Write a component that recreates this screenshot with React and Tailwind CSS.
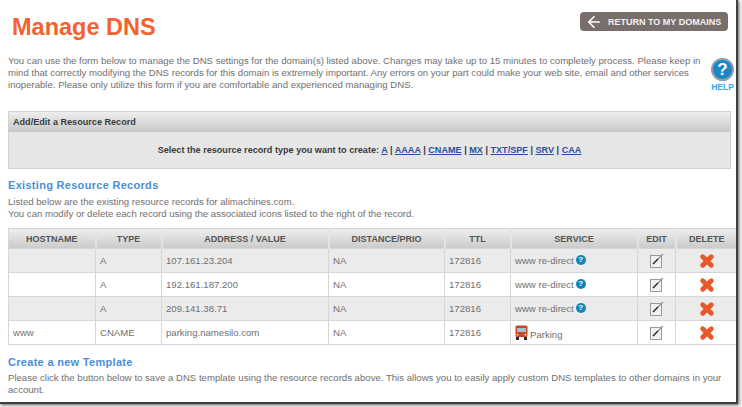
import React from 'react';
import { ArrowLeft } from 'lucide-react';

const rows = [
    { host: '', type: 'A', value: '107.161.23.204', shaded: true },
    { host: '', type: 'A', value: '192.161.187.200', shaded: false },
    { host: '', type: 'A', value: '209.141.38.71', shaded: true },
    { host: 'www', type: 'CNAME', value: 'parking.namesilo.com', shaded: false, parking: true },
];

const recordTypes = ['A', 'AAAA', 'CNAME', 'MX', 'TXT/SPF', 'SRV', 'CAA'];

const HelpDot = () => (
    <span className="inline-flex w-[10px] h-[10px] rounded-full bg-[#0f86b5] text-white text-[8px] leading-none font-bold items-center justify-center ml-[2px] relative -top-[2px]">?</span>
);

const EditIcon = () => (
    <svg width="16" height="17" viewBox="0 0 16 17" className="block mx-auto">
        <rect x="1.5" y="3.5" width="11" height="12" fill="#f1f1f1" stroke="#9a9a9a" />
        <path d="M4 12 L9 7" stroke="#222" strokeWidth="1.5" />
        <path d="M9 7 L14 2" stroke="#8f8f8f" strokeWidth="1.3" />
    </svg>
);

const DeleteIcon = () => (
    <svg width="18" height="18" viewBox="0 0 18 18" className="block mx-auto">
        <path d="M4.7 4.7 L13.3 13.3 M13.3 4.7 L4.7 13.3" stroke="#e9572b" strokeWidth="4.8" strokeLinecap="round" />
    </svg>
);

const BusIcon = () => (
    <svg width="13" height="15" viewBox="0 0 13 15" className="shrink-0">
        <rect x="0.5" y="0.5" width="12" height="11.5" rx="1.5" fill="#c8452c" />
        <rect x="2" y="3" width="9" height="4" fill="#9cc4d4" />
        <rect x="1" y="12" width="3" height="3" fill="#2a2a2a" />
        <rect x="9" y="12" width="3" height="3" fill="#2a2a2a" />
        <rect x="1.5" y="9" width="2" height="1.5" fill="#f3d27a" />
        <rect x="9.5" y="9" width="2" height="1.5" fill="#f3d27a" />
    </svg>
);

const HeadCell = ({ children }) => (
    <th className="border-r-2 border-[#e4e4e4] last:border-r-0 p-0 text-center text-[9px] font-bold text-[#555]">{children}</th>
);

const Cell = ({ children }) => (
    <td className="border border-[#d6d6d6] px-[4px] p-0 align-middle">{children}</td>
);

const App = () => {
    return (
        <div className="w-[742px] h-[407px] bg-[#f4f4f4] overflow-hidden text-[9.6px] leading-[12px] text-[#707070] font-['Liberation_Sans',Arial,sans-serif]">
            <div className="w-[738px] h-[404px] bg-white border-r-2 border-b-2 border-[#3f3f3f] shadow-[1px_1px_3px_rgba(0,0,0,0.6)] px-[8px] overflow-hidden">
                <div className="flex justify-between items-start pt-[12px] h-[52px]">
                    <h1 className="ml-[4px] mt-[1px] text-[23.5px] leading-[28px] font-bold text-[#f4622f]">Manage DNS</h1>
                    <a className="flex items-center gap-[5px] h-[19px] w-[148px] pl-[5px] rounded-[4px] bg-[#786f6c] text-[#f2f2f2] text-[9px] font-bold whitespace-nowrap">
                        <ArrowLeft size={18} strokeWidth={2.2} className="text-white" />
                        RETURN TO MY DOMAINS
                    </a>
                </div>

                <div className="flex h-[59px]">
                    <p className="w-[700px] shrink-0 pt-[3px]">
                        You can use the form below to manage the DNS settings for the domain(s) listed above. Changes may take up to 15 minutes to completely process. Please keep in
                        mind that correctly modifying the DNS records for this domain is extremely important. Any errors on your part could make your web site, email and other services
                        inoperable. Please only utilize this form if you are comfortable and experienced managing DNS.
                    </p>
                    <div className="ml-[3px] flex flex-col items-center w-[24px]">
                        <span className="mt-[6px] flex w-[23px] h-[23px] rounded-full bg-[#1b86c4] border-2 border-[#8f9ea8] text-white font-bold text-[17px] leading-none items-center justify-center">?</span>
                        <span className="mt-[2px] text-[8.5px] leading-[9px] font-bold text-[#3fa5de]">HELP</span>
                    </div>
                </div>

                <section className="w-[723px] h-[58px] border border-[#d2d2d2] bg-[#e6e6e6] text-[9.1px]">
                    <div className="h-[20px] pl-[4px] bg-gradient-to-b from-[#eeeeee] to-[#c8c8c8] font-bold text-[#3a3a3a] leading-[20px]">Add/Edit a Resource Record</div>
                    <p className="pt-[12px] text-center font-bold text-[#3a3a3a]">
                        Select the resource record type you want to create:{' '}
                        {recordTypes.map((t, i) => (
                            <span key={t}>
                                {i > 0 && ' | '}
                                <a className="underline text-[#2c4f9e]">{t}</a>
                            </span>
                        ))}
                    </p>
                </section>

                <h2 className="mt-[10px] text-[11px] leading-[13px] font-bold tracking-[0.3px] text-[#4a8fd6]">Existing Resource Records</h2>
                <p className="mt-[4px]">
                    Listed below are the existing resource records for alimachines.com.<br />
                    You can modify or delete each record using the associated icons listed to the right of the record.
                </p>

                <table className="mt-[8px] w-[729px] table-fixed border-collapse border border-[#d6d6d6]">
                    <colgroup>
                        <col className="w-[87px]" />
                        <col className="w-[66px]" />
                        <col className="w-[167px]" />
                        <col className="w-[116px]" />
                        <col className="w-[66px]" />
                        <col className="w-[127px]" />
                        <col className="w-[38px]" />
                        <col className="w-[62px]" />
                    </colgroup>
                    <thead>
                        <tr className="h-[20px] bg-gradient-to-b from-[#eeeeee] to-[#c9c9c9]">
                            {['HOSTNAME', 'TYPE', 'ADDRESS / VALUE', 'DISTANCE/PRIO', 'TTL', 'SERVICE', 'EDIT', 'DELETE'].map((h) => (
                                <HeadCell key={h}>{h}</HeadCell>
                            ))}
                        </tr>
                    </thead>
                    <tbody>
                        {rows.map((r) => (
                            <tr key={r.value} className={`h-[24px] ${r.shaded ? 'bg-[#ebebeb]' : 'bg-white'}`}>
                                <Cell>{r.host}</Cell>
                                <Cell>{r.type}</Cell>
                                <Cell>{r.value}</Cell>
                                <Cell>NA</Cell>
                                <Cell>172816</Cell>
                                <Cell>
                                    {r.parking ? (
                                        <span className="flex items-end gap-[2px]"><BusIcon /><span className="leading-[11px]">Parking</span></span>
                                    ) : (
                                        <span>www re-direct<HelpDot /></span>
                                    )}
                                </Cell>
                                <Cell><EditIcon /></Cell>
                                <Cell><DeleteIcon /></Cell>
                            </tr>
                        ))}
                    </tbody>
                </table>

                <h2 className="mt-[11px] text-[11px] leading-[13px] font-bold tracking-[0.3px] text-[#4a8fd6]">Create a new Template</h2>
                <p className="mt-[3px] w-[722px]">
                    Please click the button below to save a DNS template using the resource records above. This allows you to easily apply custom DNS templates to other domains in your account.
                </p>
            </div>
        </div>
    );
};

export default App;
